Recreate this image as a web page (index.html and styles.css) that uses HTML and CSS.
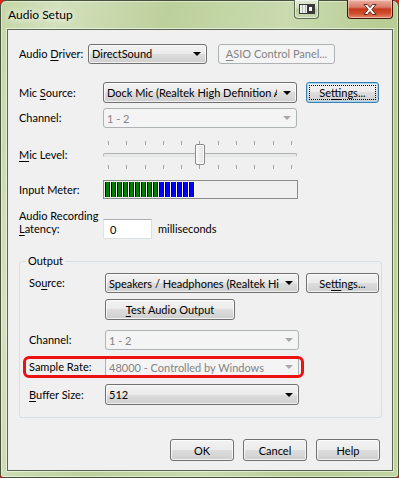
FILE: index.html
```html
<!DOCTYPE html>
<html lang="en">
<head>
    <meta charset="UTF-8">
    <title>Audio Setup</title>
    <link rel="stylesheet" href="styles.css">
</head>
<body>
    <div class="window">
        <div class="titlebar">
            <span class="title">Audio Setup</span>
            <div class="cap-btn restore">
                <svg width="16" height="10" viewBox="0 0 16 10">
                    <rect x="0.5" y="0.5" width="15" height="9" fill="#eef0ee" stroke="#3a3a3a"/>
                    <line x1="3.5" y1="1" x2="3.5" y2="9" stroke="#b8bcb8"/>
                    <line x1="6.5" y1="1" x2="6.5" y2="9" stroke="#b8bcb8"/>
                    <rect x="8" y="1" width="7" height="8" fill="#3a3a3a"/>
                    <rect x="10" y="3" width="3" height="4" fill="#fff"/>
                </svg>
            </div>
            <div class="cap-btn close">
                <svg width="14" height="11" viewBox="0 0 14 11">
                    <path d="M1 0.5 H4.5 L7 3.6 L9.5 0.5 H13 L8.9 5.5 L13 10.5 H9.5 L7 7.4 L4.5 10.5 H1 L5.1 5.5 Z" fill="#fff" stroke="#5a1a10" stroke-width="0.9"/>
                </svg>
            </div>
        </div>

        <div class="client">
            <div class="row row-driver">
                <label class="lbl lbl-driver">Audio <u>D</u>river:</label>
                <div class="combo driver"><span class="val">DirectSound</span><span class="arrow"></span></div>
                <button class="btn asio" disabled><u>A</u>SIO Control Panel...</button>
            </div>

            <div class="row row-mic">
                <label class="lbl">Mic <u>S</u>ource:</label>
                <div class="combo wide"><span class="val">Dock Mic (Realtek High Definition Au</span><span class="arrow"></span></div>
                <button class="btn settings focused"><span class="focus-rect">Se<u>t</u>tings...</span></button>
            </div>

            <div class="row row-channel">
                <label class="lbl">Channel:</label>
                <div class="combo wide disabled"><span class="val">1 - 2</span><span class="arrow"></span></div>
            </div>

            <div class="row row-level">
                <label class="lbl"><u>M</u>ic Level:</label>
                <div class="slider">
                    <div class="ticks">
                        <i></i><i></i><i></i><i></i><i></i><i></i><i></i><i></i><i></i><i></i><i></i>
                    </div>
                    <div class="track"></div>
                    <div class="ticks">
                        <i></i><i></i><i></i><i></i><i></i><i></i><i></i><i></i><i></i><i></i><i></i>
                    </div>
                    <div class="thumb"></div>
                </div>
            </div>

            <div class="row row-meter">
                <label class="lbl">Input Meter:</label>
                <div class="meter">
                    <i class="g"></i><i class="g"></i><i class="g"></i><i class="g"></i><i class="g"></i><i class="g"></i><i class="g"></i><i class="g"></i><i class="g"></i>
                    <i class="b"></i><i class="b"></i><i class="b"></i><i class="b"></i><i class="b"></i><i class="b"></i>
                </div>
            </div>

            <div class="row row-latency">
                <label class="lbl two-line">Audio Recording<br><u>L</u>atency:</label>
                <div class="textbox">0</div>
                <span class="unit">milliseconds</span>
            </div>

            <fieldset class="group">
                <legend>Output</legend>

                <div class="row">
                    <label class="lbl out">So<u>u</u>rce:</label>
                    <div class="combo out-combo"><span class="val">Speakers / Headphones (Realtek Hig</span><span class="arrow"></span></div>
                    <button class="btn settings out-settings">Se<u>t</u>tings...</button>
                </div>

                <div class="row row-test">
                    <button class="btn test"><u>T</u>est Audio Output</button>
                </div>

                <div class="row row-out-channel">
                    <label class="lbl out">Channel:</label>
                    <div class="combo out-combo disabled"><span class="val">1 - 2</span><span class="arrow"></span></div>
                </div>

                <div class="row row-rate">
                    <label class="lbl out">Sample Rate:</label>
                    <div class="combo out-combo flat"><span class="val">48000 - Controlled by Windows</span><span class="arrow"></span></div>
                    <div class="highlight"></div>
                </div>

                <div class="row row-buffer">
                    <label class="lbl out"><u>B</u>uffer Size:</label>
                    <div class="combo out-combo"><span class="val">512</span><span class="arrow"></span></div>
                </div>
            </fieldset>

            <div class="actions">
                <button class="btn action">OK</button>
                <button class="btn action">Cancel</button>
                <button class="btn action">Help</button>
            </div>
        </div>
    </div>
</body>
</html>
```

FILE: styles.css
```css
* {
    box-sizing: border-box;
}

body {
    margin: 0;
    background-color: #e8201a;
    font-family: Lato, "Noto Sans", sans-serif;
    font-size: 11px;
    color: #000;
}

u {
    text-decoration-thickness: 1px;
    text-underline-offset: 2px;
}

/* window frame */
.window {
    width: 399px;
    height: 478px;
    display: flex;
    flex-direction: column;
    border: 1px solid #46523a;
    border-radius: 6px 6px 3px 3px;
    background: linear-gradient(100deg, #c4d6a6 0%, #d3e1bc 12%, #bcd09b 35%, #c9dbaf 60%, #b8cc95 80%, #c2d4a3 100%);
    box-shadow: inset 0 0 0 1px rgba(255, 255, 255, 0.45);
}

.titlebar {
    height: 28px;
    display: flex;
    align-items: flex-start;
}

.title {
    margin: 6px 0 0 7px;
    font-size: 12px;
    text-shadow: 0 0 6px #fff, 0 0 10px #fff;
}

.cap-btn {
    height: 19px;
    margin-top: -1px;
    display: flex;
    align-items: center;
    justify-content: center;
    border: 1px solid #5f6c52;
    border-top: none;
    border-radius: 0 0 4px 4px;
}

.restore {
    width: 25px;
    margin-left: auto;
    background: linear-gradient(#e2ebd6, #cfdcbc 45%, #b9cb9b 50%, #c8d9ad);
    box-shadow: inset 0 0 0 1px rgba(255, 255, 255, 0.5);
}

.close {
    width: 46px;
    margin: -1px 5px 0 28px;
    border-color: #4a140b;
    background: linear-gradient(#eab0a2, #d97b66 40%, #c53a1c 50%, #cf4f2f 75%, #e08a6c);
    box-shadow: inset 0 0 0 1px rgba(255, 220, 210, 0.55);
}

.client {
    flex: 1;
    margin: 0 5px 6px 6px;
    border: 1px solid #5a664f;
    background-color: #f0f0f0;
    padding: 13px 0 0 11px;
    box-shadow: 0 0 0 1px rgba(255, 255, 255, 0.55);
}

/* rows */
.row {
    display: flex;
    align-items: center;
    position: relative;
}

.lbl {
    flex: none;
    width: 84px;
    line-height: 14px;
    white-space: nowrap;
}

.lbl-driver {
    width: 69px;
}

.lbl.out {
    width: 76px;
}

.row-driver {
    height: 21px;
}

.row-mic {
    height: 21px;
    margin-top: 18px;
}

.row-channel {
    height: 20px;
    margin-top: 5px;
}

.row-level {
    margin-top: 13px;
}

.row-meter {
    margin-top: 11px;
}

.row-latency {
    margin-top: 10px;
    align-items: flex-start;
}

.two-line {
    line-height: 13px;
}

/* combo boxes */
.combo {
    flex: none;
    height: 20px;
    display: flex;
    align-items: center;
    padding-left: 3px;
    border: 1px solid #707070;
    border-radius: 3px;
    background: linear-gradient(#f2f2f2, #ebebeb 50%, #dddddd 50%, #cfcfcf);
    box-shadow: inset 0 0 0 1px rgba(255, 255, 255, 0.7);
}

.combo .val {
    flex: 1;
    min-width: 0;
    overflow: hidden;
    white-space: nowrap;
}

.combo .arrow {
    margin: 0 5px 0 6px;
    flex: none;
    width: 0;
    height: 0;
    border-left: 4px solid transparent;
    border-right: 4px solid transparent;
    border-top: 4px solid #000;
}

.combo.driver {
    width: 119px;
}

.combo.wide {
    width: 194px;
}

.row-mic .combo {
    height: 21px;
}

.combo.disabled,
.combo.flat {
    border-color: #adb2b5;
    background: #f4f4f4;
    box-shadow: none;
    color: #838383;
}

.combo.disabled .arrow,
.combo.flat .arrow {
    border-top-color: #a8a8a8;
}

.combo.out-combo {
    width: 194px;
}

/* buttons */
.btn {
    flex: none;
    height: 20px;
    padding: 0;
    font-family: inherit;
    font-size: 11px;
    color: #000;
    white-space: nowrap;
    border: 1px solid #707070;
    border-radius: 3px;
    background: linear-gradient(#f2f2f2, #ebebeb 50%, #dddddd 50%, #cfcfcf);
    box-shadow: inset 0 0 0 1px rgba(255, 255, 255, 0.75);
}

.btn:disabled {
    border-color: #adb2b5;
    background: #f4f4f4;
    box-shadow: none;
    color: #838383;
}

.asio {
    width: 117px;
    margin-left: 11px;
}

.settings {
    width: 73px;
    height: 21px;
    margin-left: 9px;
}

.focused {
    border-color: #3c7fb1;
    box-shadow: inset 0 0 0 1px #9fd4f0;
    padding: 2px;
}

.focus-rect {
    display: block;
    height: 100%;
    line-height: 15px;
    outline: 1px dotted #000;
    outline-offset: -1px;
}

/* slider */
.slider {
    position: relative;
    width: 194px;
    height: 28px;
    display: flex;
    flex-direction: column;
}

.ticks {
    height: 4px;
    padding: 0 5px;
    display: flex;
    justify-content: space-between;
}

.ticks i {
    width: 1px;
    height: 4px;
    background-color: #a3a3a3;
}

.track {
    margin: 8px 0 0;
    height: 4px;
    border: 1px solid #b0b0b0;
    border-bottom-color: #e3e3e3;
    border-radius: 2px;
    background-color: #e7eaea;
}

.track + .ticks {
    margin-top: 8px;
}

.thumb {
    position: absolute;
    left: 92px;
    top: 3px;
    width: 10px;
    height: 21px;
    border: 1px solid #8a8a8a;
    border-radius: 2px;
    background: linear-gradient(90deg, #f7f7f7, #e4e4e4);
    box-shadow: inset 0 0 0 1px #fff;
}

/* input meter */
.meter {
    width: 195px;
    height: 19px;
    border: 1px solid #8b8b8b;
    background-color: #f0f0f0;
    display: flex;
    padding: 1px 0 1px 1px;
}

.meter i {
    width: 5px;
    margin-right: 1px;
    border-left: 1px solid #000;
    border-right: 1px solid #000;
    box-shadow: 1px 0 0 #fff;
}

.meter .g {
    background-color: #008000;
}

.meter .b {
    background-color: #0000ff;
}

/* latency */
.textbox {
    margin-top: 10px;
    width: 49px;
    height: 20px;
    padding: 3px 0 0 6px;
    background-color: #fff;
    border: 1px solid #dbdfe6;
    border-top-color: #abadb3;
    border-left-color: #e2e3ea;
}

.unit {
    margin: 13px 0 0 6px;
}

/* output group */
.group {
    margin: 15px 10px 0 0;
    padding: 5px 0 12px 9px;
    border: 1px solid #d5dfe5;
    border-radius: 3px;
    min-width: 0;
}

.group legend {
    padding: 0 2px;
    margin-left: -3px;
    line-height: 14px;
}

.group .row {
    height: 20px;
}

.out-settings {
    margin-left: 7px;
    width: 73px;
    height: 20px;
}

.row-test {
    margin-top: 6px;
}

.group .row-test {
    height: 21px;
}

.test {
    width: 130px;
    height: 21px;
    margin-left: 76px;
}

.row-out-channel {
    margin-top: 10px;
}

.row-rate {
    margin-top: 7px;
}

.highlight {
    position: absolute;
    left: -6px;
    top: -1px;
    width: 281px;
    height: 22px;
    border: 3px solid #ee1111;
    border-radius: 6px;
}

.row-buffer {
    margin-top: 7px;
}

.group .row-buffer {
    height: 21px;
}

.row-buffer .combo {
    height: 21px;
}

/* dialog buttons */
.actions {
    display: flex;
    justify-content: flex-end;
    gap: 9px;
    margin-top: 21px;
    padding-right: 12px;
}

.action {
    width: 64px;
    height: 22px;
}
```
